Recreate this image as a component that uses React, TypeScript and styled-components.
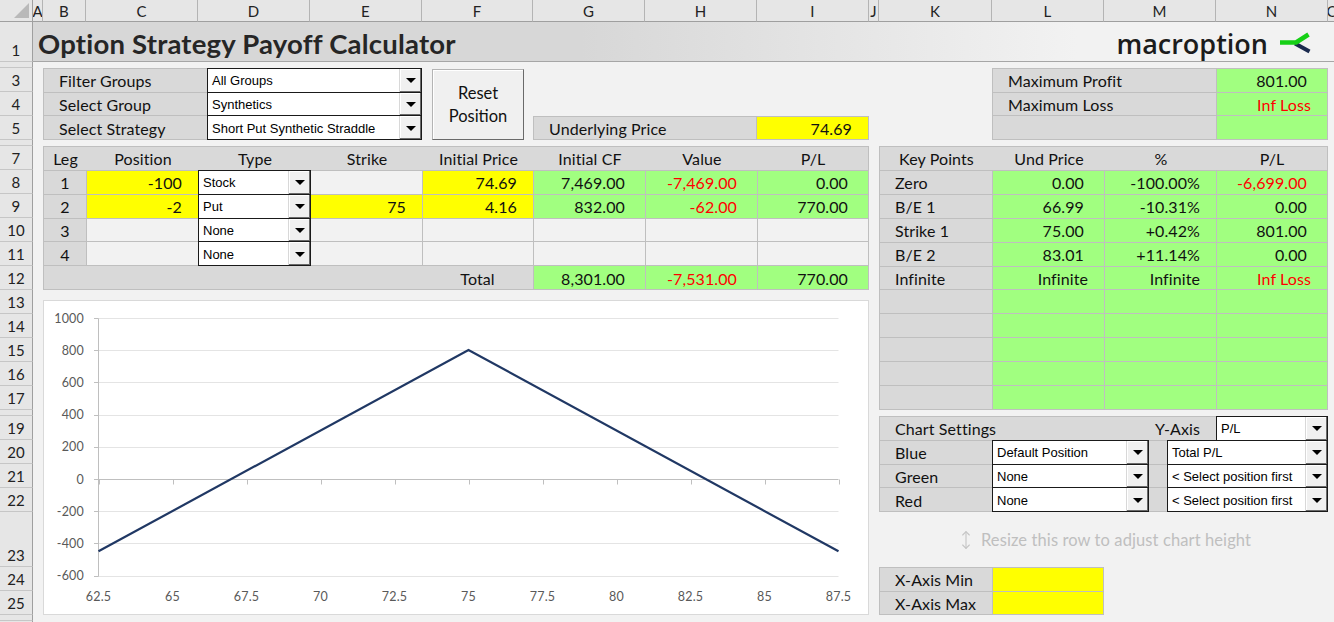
import React from 'react';
import styled, { createGlobalStyle } from 'styled-components';
import { MoveVertical } from 'lucide-react';

type Tone = 'label' | 'plain' | 'green' | 'yellow';
type Align = 'left' | 'center' | 'right';

const TONES: Record<Tone, string> = {
  label: '#d9d9d9',
  plain: '#f2f2f2',
  green: '#a1ff80',
  yellow: '#ffff00',
};

const JUSTIFY: Record<Align, string> = {
  left: 'flex-start',
  center: 'center',
  right: 'flex-end',
};

// sheet geometry, as Excel lays it out
const COLUMNS: [string, number][] = [
  ['A', 10], ['B', 43], ['C', 112], ['D', 112], ['E', 112], ['F', 111],
  ['G', 112], ['H', 112], ['I', 112], ['J', 10], ['K', 113], ['L', 112],
  ['M', 112], ['N', 112], ['O', 10],
];
const ODD_ROWS: Record<number, number> = { 1: 40, 2: 6, 6: 6, 18: 6, 23: 55, 26: 6 };
const ROW_IDS = Array.from({ length: 27 }, (_, i) => i + 1);
const HIDDEN_LABELS = [2, 6, 18, 26, 27];
const rowHeight = (r: number) => ODD_ROWS[r] ?? 24;

const colLine = (c: string) => COLUMNS.findIndex(([id]) => id === c) + 2;
const cols = (from: string, to: string) => `${colLine(from)} / ${colLine(to) + 1}`;
const rows = (from: number, to: number) => `${from + 1} / ${to + 2}`;
const tracks = (...widths: number[]) =>
  widths.slice(0, -1).map((w) => `${w - 1}px`).join(' ') + ' minmax(0, 1fr)';
const plainTracks = (...widths: number[]) =>
  widths.slice(0, -1).map((w) => `${w}px`).join(' ') + ' minmax(0, 1fr)';

const LEG_COLS = [43, 112, 112, 112, 111, 112, 112, 112];
const KEY_COLS = [113, 112, 112, 112];

const legs = [
  { leg: 1, pos: '-100', type: 'Stock', strike: '', price: '74.69', cf: '7,469.00', value: '-7,469.00', pl: '0.00' },
  { leg: 2, pos: '-2', type: 'Put', strike: '75', price: '4.16', cf: '832.00', value: '-62.00', pl: '770.00' },
  { leg: 3, pos: '', type: 'None', strike: '', price: '', cf: '', value: '', pl: '' },
  { leg: 4, pos: '', type: 'None', strike: '', price: '', cf: '', value: '', pl: '' },
];

const keyPoints = [
  ['Zero', '0.00', '-100.00%', '-6,699.00'],
  ['B/E 1', '66.99', '-10.31%', '0.00'],
  ['Strike 1', '75.00', '+0.42%', '801.00'],
  ['B/E 2', '83.01', '+11.14%', '0.00'],
  ['Infinite', 'Infinite', 'Infinite', 'Inf Loss'],
  ['', '', '', ''],
  ['', '', '', ''],
  ['', '', '', ''],
  ['', '', '', ''],
  ['', '', '', ''],
];

const isMoney = (v: string) => /^-?[\d,]+\.\d\d$/.test(v);
const isRed = (v: string) => (v.startsWith('-') && !v.endsWith('%')) || v === 'Inf Loss';

// chart scale
const X_TICKS = [62.5, 65, 67.5, 70, 72.5, 75, 77.5, 80, 82.5, 85, 87.5];
const Y_TICKS = [1000, 800, 600, 400, 200, 0, -200, -400, -600];
const px = (p: number) => 55.5 + (p - 62.5) * 29.6;
const py = (v: number) => 179 - v * 0.161;
const payoff = (p: number) => -100 * (p - 74.69) - 200 * (Math.max(75 - p, 0) - 4.16);

const App = () => {
  const linePoints = [62.5, 75, 87.5].map((p) => `${px(p)},${py(payoff(p))}`).join(' ');

  return (
    <>
      <GlobalStyle />
      <Sheet>
        <Corner />
        {COLUMNS.map(([id], i) => (
          <ColHead key={id} $col={i + 2}>{id}</ColHead>
        ))}
        {ROW_IDS.map((r) => (
          <RowHead key={r} $row={r + 1}>{HIDDEN_LABELS.includes(r) ? '' : r}</RowHead>
        ))}

        <TitleBar>
          <Title>Option Strategy Payoff Calculator</Title>
          <Logo>
            <LogoText>macroption</LogoText>
            <svg width="34" height="24" viewBox="0 0 34 24">
              <path d="M17 12.5 L31.5 20.5" stroke="#1b2a4e" strokeWidth="4" fill="none" />
              <path d="M2 11.5 H18 L30.5 3.5" stroke="#16d016" strokeWidth="4.5" fill="none" strokeLinejoin="round" />
            </svg>
          </Logo>
        </TitleBar>

        <Area $cols={cols('B', 'E')} $rows={rows(3, 5)}>
          <Table $cols="163px minmax(0, 1fr)" $rows={3}>
            <Cell $tone="label">Filter Groups</Cell>
            <Select><SelectText>All Groups</SelectText><SelectArrow /></Select>
            <Cell $tone="label">Select Group</Cell>
            <Select><SelectText>Synthetics</SelectText><SelectArrow /></Select>
            <Cell $tone="label">Select Strategy</Cell>
            <Select><SelectText>Short Put Synthetic Straddle</SelectText><SelectArrow /></Select>
          </Table>
        </Area>

        <ButtonSlot $cols={cols('F', 'F')} $rows={rows(3, 5)}>
          <ResetButton>Reset<br />Position</ResetButton>
        </ButtonSlot>

        <Area $cols={cols('G', 'I')} $rows={rows(5, 5)}>
          <Table $cols="222px minmax(0, 1fr)" $rows={1}>
            <Cell $tone="label">Underlying Price</Cell>
            <Cell $tone="yellow" $align="right">74.69</Cell>
          </Table>
        </Area>

        <Area $cols={cols('L', 'N')} $rows={rows(3, 5)}>
          <Table $cols="223px minmax(0, 1fr)" $rows={3}>
            <Cell $tone="label">Maximum Profit</Cell>
            <Cell $tone="green" $align="right" $pr={20}>801.00</Cell>
            <Cell $tone="label">Maximum Loss</Cell>
            <Cell $tone="green" $align="right" $red>Inf Loss</Cell>
            <Cell $tone="label" />
            <Cell $tone="green" />
          </Table>
        </Area>

        <Area $cols={cols('B', 'I')} $rows={rows(7, 12)}>
          <Table $cols={tracks(...LEG_COLS)} $rows={6}>
            <HeadRow $cols={plainTracks(...LEG_COLS)}>
              {['Leg', 'Position', 'Type', 'Strike', 'Initial Price', 'Initial CF', 'Value', 'P/L'].map((h) => (
                <HeadLabel key={h}>{h}</HeadLabel>
              ))}
            </HeadRow>
            {legs.map((l) => {
              const on = l.pos !== '';
              return (
                <React.Fragment key={l.leg}>
                  <Cell $tone="label" $align="center">{l.leg}</Cell>
                  <Cell $tone={on ? 'yellow' : 'plain'} $align="right">{l.pos}</Cell>
                  <Select><SelectText>{l.type}</SelectText><SelectArrow /></Select>
                  <Cell $tone={l.strike ? 'yellow' : 'plain'} $align="right">{l.strike}</Cell>
                  <Cell $tone={on ? 'yellow' : 'plain'} $align="right">{l.price}</Cell>
                  <Cell $tone={on ? 'green' : 'plain'} $align="right" $pr={20}>{l.cf}</Cell>
                  <Cell $tone={on ? 'green' : 'plain'} $align="right" $pr={20} $red={isRed(l.value)}>{l.value}</Cell>
                  <Cell $tone={on ? 'green' : 'plain'} $align="right" $pr={20}>{l.pl}</Cell>
                </React.Fragment>
              );
            })}
            <TotalCell><span>Total</span></TotalCell>
            <Cell $tone="green" $align="right" $pr={20}>8,301.00</Cell>
            <Cell $tone="green" $align="right" $pr={20} $red>-7,531.00</Cell>
            <Cell $tone="green" $align="right" $pr={20}>770.00</Cell>
          </Table>
        </Area>

        <Area $cols={cols('K', 'N')} $rows={rows(7, 17)}>
          <Table $cols={tracks(...KEY_COLS)} $rows={11}>
            <HeadRow $cols={plainTracks(...KEY_COLS)}>
              {['Key Points', 'Und Price', '%', 'P/L'].map((h) => (
                <HeadLabel key={h}>{h}</HeadLabel>
              ))}
            </HeadRow>
            {keyPoints.map(([name, und, pct, pl], i) => (
              <React.Fragment key={i}>
                <Cell $tone="label">{name}</Cell>
                <Cell $tone="green" $align="right" $pr={isMoney(und) ? 20 : 16}>{und}</Cell>
                <Cell $tone="green" $align="right">{pct}</Cell>
                <Cell $tone="green" $align="right" $pr={isMoney(pl) ? 20 : 16} $red={isRed(pl)}>{pl}</Cell>
              </React.Fragment>
            ))}
          </Table>
        </Area>

        <ChartSlot $cols={cols('B', 'I')} $rows={rows(13, 25)}>
          <ChartBox>
            <svg viewBox="1 1 824 313" width="100%" height="100%">
              {Y_TICKS.filter((v) => v !== 0).map((v) => (
                <line key={v} x1={55.5} x2={795.5} y1={Math.round(py(v)) + 0.5} y2={Math.round(py(v)) + 0.5} stroke="#e4e4e4" />
              ))}
              <line x1={55.5} x2={55.5} y1={Math.round(py(1000)) + 0.5} y2={Math.round(py(-600)) + 0.5} stroke="#bfbfbf" />
              <line x1={55.5} x2={795.5} y1={179.5} y2={179.5} stroke="#bfbfbf" />
              {Y_TICKS.map((v) => (
                <React.Fragment key={v}>
                  <line x1={51} x2={55.5} y1={Math.round(py(v)) + 0.5} y2={Math.round(py(v)) + 0.5} stroke="#bfbfbf" />
                  <AxisText x={41} y={py(v) + 4.5} textAnchor="end">{v}</AxisText>
                </React.Fragment>
              ))}
              {X_TICKS.map((p) => (
                <React.Fragment key={p}>
                  <line x1={Math.round(px(p)) + 0.5} x2={Math.round(px(p)) + 0.5} y1={179.5} y2={184.5} stroke="#bfbfbf" />
                  <AxisText x={px(p)} y={300.5} textAnchor="middle">{p}</AxisText>
                </React.Fragment>
              ))}
              <polyline points={linePoints} fill="none" stroke="#203864" strokeWidth={2.2} />
            </svg>
          </ChartBox>
        </ChartSlot>

        <Area $cols={cols('K', 'N')} $rows={rows(19, 22)}>
          <Table $cols={tracks(...KEY_COLS)} $rows={4}>
            <SettingsHead>
              <span>Chart Settings</span>
              <span>Y-Axis</span>
            </SettingsHead>
            <Select><SelectText>P/L</SelectText><SelectArrow /></Select>
            {[
              ['Blue', 'Default Position', 'Total P/L'],
              ['Green', 'None', '< Select position first'],
              ['Red', 'None', '< Select position first'],
            ].map(([color, pos, what]) => (
              <React.Fragment key={color}>
                <Cell $tone="label">{color}</Cell>
                <SelectPair>
                  <Select $w={157}><SelectText>{pos}</SelectText><SelectArrow /></Select>
                  <Select $w={161}><SelectText>{what}</SelectText><SelectArrow /></Select>
                </SelectPair>
              </React.Fragment>
            ))}
          </Table>
        </Area>

        <Hint $cols={cols('K', 'N')} $rows={rows(23, 23)}>
          <MoveVertical size={20} strokeWidth={1.3} color="#c4c4c4" />
          <span>Resize this row to adjust chart height</span>
        </Hint>

        <Area $cols={cols('K', 'L')} $rows={rows(24, 25)}>
          <Table $cols="112px minmax(0, 1fr)" $rows={2}>
            <Cell $tone="label">X-Axis Min</Cell>
            <Cell $tone="yellow" />
            <Cell $tone="label">X-Axis Max</Cell>
            <Cell $tone="yellow" />
          </Table>
        </Area>
      </Sheet>
    </>
  );
};

export default App;

const GlobalStyle = createGlobalStyle`
  html, body {
    margin: 0;
    padding: 0;
    background: #f2f2f2;
    overflow: hidden;
  }
  * {
    box-sizing: border-box;
  }
`;

const Sheet = styled.div`
  display: grid;
  grid-template-columns: 33px ${COLUMNS.map(([, w]) => `${w}px`).join(' ')};
  grid-template-rows: 22px ${ROW_IDS.map((r) => `${rowHeight(r)}px`).join(' ')};
  width: 1334px;
  height: 622px;
  overflow: hidden;
  background: #f2f2f2;
  font-family: Lato, "Liberation Sans", sans-serif;
  font-size: 16px;
  letter-spacing: 0.1px;
  color: #111;
`;

const Corner = styled.div`
  grid-column: 1;
  grid-row: 1;
  display: flex;
  align-items: flex-end;
  justify-content: flex-end;
  padding: 0 3px 3px 0;
  background: #e6e6e6;
  border-right: 1px solid #a0a0a0;
  border-bottom: 1px solid #a0a0a0;

  &::after {
    content: '';
    border-left: 15px solid transparent;
    border-bottom: 15px solid #b9b9b9;
  }
`;

const ColHead = styled.div<{ $col: number }>`
  grid-row: 1;
  grid-column: ${(p) => p.$col};
  display: flex;
  align-items: center;
  justify-content: center;
  padding-top: 1px;
  background: #e6e6e6;
  border-right: 1px solid #b4b4b4;
  border-bottom: 1px solid #9f9f9f;
  color: #222;
  font-size: 15px;
  overflow: hidden;
`;

const RowHead = styled.div<{ $row: number }>`
  grid-column: 1;
  grid-row: ${(p) => p.$row};
  display: flex;
  align-items: flex-end;
  justify-content: center;
  padding-bottom: 1px;
  line-height: 20px;
  background: #e6e6e6;
  border-right: 1px solid #9f9f9f;
  border-bottom: 1px solid #c6c6c6;
  color: #222;
  font-size: 15px;
  overflow: hidden;
`;

const TitleBar = styled.div`
  grid-column: 2 / -1;
  grid-row: 2;
  display: flex;
  align-items: center;
  justify-content: space-between;
  padding: 3px 0 0 5px;
  background: linear-gradient(to right, #d7d7d7 0%, #d7d7d7 42%, #f2f2f2 80%);
  border-bottom: 1px solid #a6a6a6;
`;

const Title = styled.h1`
  margin: 0;
  font-size: 27.5px;
  font-weight: 700;
  letter-spacing: 0.2px;
  color: #262626;
`;

const Logo = styled.div`
  display: flex;
  align-items: center;
  gap: 10px;
  margin-right: 26px;
`;

const LogoText = styled.span`
  font-family: "Open Sans", sans-serif;
  font-size: 27px;
  font-weight: 600;
  letter-spacing: 0;
  color: #1c1c1c;
`;

const Area = styled.div<{ $cols: string; $rows: string }>`
  grid-column: ${(p) => p.$cols};
  grid-row: ${(p) => p.$rows};
  min-width: 0;
  min-height: 0;
`;

const Table = styled.div<{ $cols: string; $rows: number }>`
  display: grid;
  grid-template-columns: ${(p) => p.$cols};
  grid-template-rows: repeat(${(p) => p.$rows}, minmax(0, 1fr));
  gap: 1px;
  padding: 1px;
  height: 100%;
  background: #bfbfbf;
`;

const Cell = styled.div<{ $tone?: Tone; $align?: Align; $red?: boolean; $pr?: number }>`
  display: flex;
  align-items: center;
  justify-content: ${(p) => JUSTIFY[p.$align ?? 'left']};
  padding: 1px ${(p) => (p.$align === 'center' ? 0 : p.$pr ?? 16)}px 0 ${(p) => (p.$align === 'center' ? 0 : 15)}px;
  background: ${(p) => TONES[p.$tone ?? 'plain']};
  color: ${(p) => (p.$red ? '#ff0000' : '#111')};
  white-space: nowrap;
  overflow: hidden;
`;

const HeadRow = styled.div<{ $cols: string }>`
  grid-column: 1 / -1;
  display: grid;
  grid-template-columns: ${(p) => p.$cols};
  background: #d9d9d9;
`;

const HeadLabel = styled.span`
  display: flex;
  align-items: center;
  justify-content: center;
  padding-top: 1px;
  white-space: nowrap;
`;

const TotalCell = styled.div`
  grid-column: 1 / 6;
  display: flex;
  align-items: center;
  justify-content: flex-end;
  padding-top: 1px;
  background: #d9d9d9;

  span {
    width: 111px;
    text-align: center;
  }
`;

const SettingsHead = styled.div`
  grid-column: 1 / 4;
  display: flex;
  align-items: center;
  justify-content: space-between;
  padding: 1px 16px 0 15px;
  background: #d9d9d9;
`;

const SelectPair = styled.div`
  grid-column: 2 / -1;
  display: flex;
  justify-content: space-between;
  background: #d9d9d9;
`;

const Select = styled.div<{ $w?: number }>`
  display: flex;
  flex: ${(p) => (p.$w ? `0 0 ${p.$w}px` : '1 1 auto')};
  margin: -1px;
  min-width: 0;
  background: #fff;
  border: 1px solid #1a1a1a;
  font-family: "Liberation Sans", Arial, sans-serif;
  font-size: 13px;
  letter-spacing: 0;
  color: #000;
`;

const SelectText = styled.span`
  flex: 1 1 auto;
  display: flex;
  align-items: center;
  padding: 1px 0 0 4px;
  white-space: nowrap;
  overflow: hidden;
`;

const SelectArrow = styled.span`
  flex: 0 0 22px;
  display: flex;
  align-items: center;
  justify-content: center;
  padding-top: 1px;
  background: #f0f0f0;
  border-left: 1px solid #d8d8d8;
  box-shadow: inset -1px -1px 0 #6a6a6a, inset 1px 1px 0 #ffffff;

  &::after {
    content: '';
    border-left: 5px solid transparent;
    border-right: 5px solid transparent;
    border-top: 5px solid #000;
  }
`;

const ButtonSlot = styled(Area)`
  display: flex;
  padding: 1px 9px 0 10px;
`;

const ResetButton = styled.button`
  flex: 1;
  padding: 0;
  background: #f0f0f0;
  border: 1px solid #b4b4b4;
  border-right-color: #6a6a6a;
  border-bottom-color: #6a6a6a;
  box-shadow: inset 1px 1px 0 #ffffff;
  font-family: Lato, "Liberation Sans", sans-serif;
  font-size: 16.5px;
  line-height: 23px;
  color: #111;
`;

const ChartSlot = styled(Area)`
  padding-top: 10px;
`;

const ChartBox = styled.div`
  height: 100%;
  background: #fff;
  border: 1px solid #d9d9d9;

  svg {
    display: block;
  }
`;

const AxisText = styled.text`
  font-family: Lato, "Liberation Sans", sans-serif;
  font-size: 12.5px;
  letter-spacing: 0.2px;
  fill: #595959;
`;

const Hint = styled(Area)`
  display: flex;
  align-items: center;
  justify-content: center;
  gap: 5px;
  font-size: 16.5px;
  color: #bfbfbf;
`;
